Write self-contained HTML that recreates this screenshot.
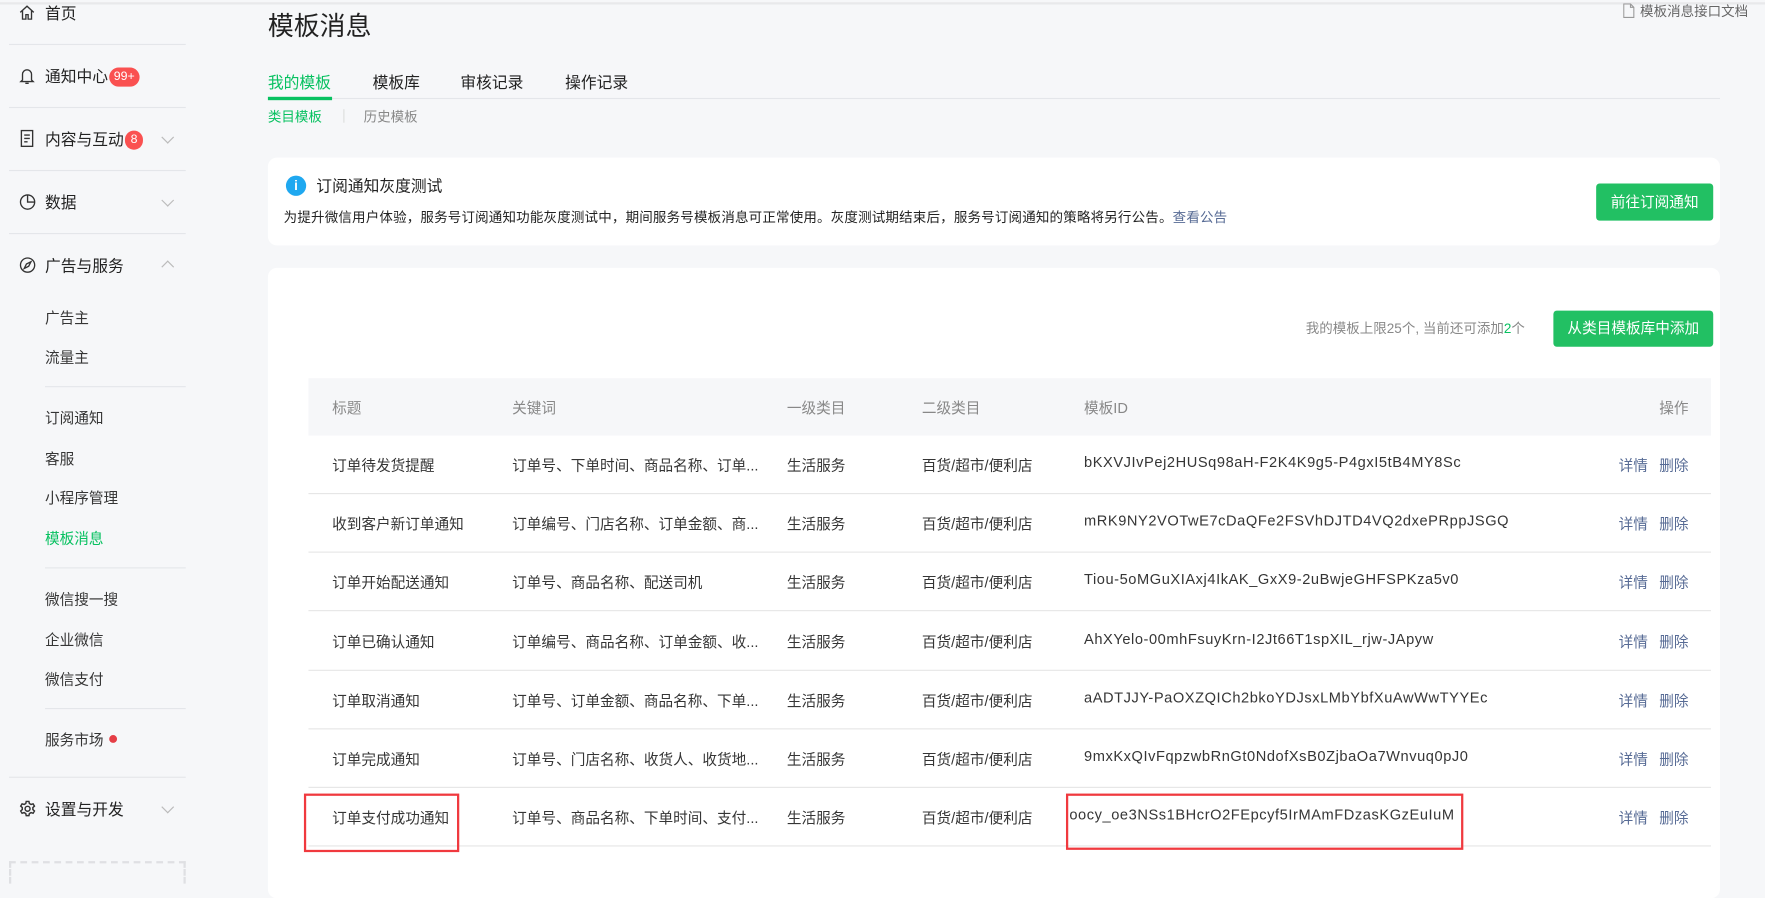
<!DOCTYPE html>
<html><head><meta charset="utf-8"><style>
*{margin:0;padding:0;box-sizing:border-box}
html,body{width:1765px;height:870px;overflow:hidden;background:#f6f7f9}
#w{position:absolute;left:0;top:0;width:1568px;height:773px;transform:scale(1.12564);transform-origin:0 0;font-family:"Liberation Sans","Noto Sans CJK SC",sans-serif;color:#353535;font-size:13px}
.a{position:absolute;white-space:nowrap}
.sep{position:absolute;height:1px;background:#e4e6ea}
.nav{font-size:14px;color:#222}
.sub{font-size:13px;color:#353535}
.badge{display:inline-block;background:#fa5151;color:#fff;border-radius:9px;font-size:11px;height:17px;line-height:17px;padding:0 4px;vertical-align:2px;margin-left:1px}
.chev{position:absolute;width:8px;height:8px;border-right:1px solid #bbb;border-bottom:1px solid #bbb}
.card{position:absolute;background:#fff;border-radius:8px}
.btn{position:absolute;background:#22c063;color:#fff;border-radius:3px;font-size:13px;text-align:center}
.th{color:#888;font-size:13px}
.row{position:absolute;left:274px;width:1246px;height:52px;border-bottom:1px solid #e6e6e6}
.row span{position:absolute;top:16px;white-space:nowrap;font-size:13px;color:#353535}
.row span.id{letter-spacing:0.5px}
.op{color:#576b95!important}
</style></head><body><div id="w">
<div class="sep" style="left:0;top:2px;width:1568px;background:#e8e9eb;height:2px"></div>
<svg class="a" style="left:17px;top:4px" width="14" height="14" viewBox="0 0 14 14" fill="none" stroke="#333" stroke-width="1.2"><path d="M1 7L7 1.5L13 7M3 5.5V13H6V9H8V13H11V5.5"/></svg>
<div class="a nav" style="left:40px;top:2px">首页</div>
<div class="sep" style="left:8px;top:39px;width:157px"></div>
<svg class="a" style="left:17px;top:60px" width="14" height="16" viewBox="0 0 14 16" fill="none" stroke="#333" stroke-width="1.2"><path d="M3 11V6a4 4 0 0 1 8 0v5l1.5 1.5h-11z M5.5 14h3"/></svg>
<div class="a nav" style="left:40px;top:58px">通知中心<span class="badge">99+</span></div>
<div class="sep" style="left:8px;top:95px;width:157px"></div>
<svg class="a" style="left:18px;top:115px" width="12" height="16" viewBox="0 0 12 16" fill="none" stroke="#333" stroke-width="1.2"><rect x="1" y="1" width="10" height="14"/><path d="M3.5 5h5M3.5 8h5M3.5 11h3"/></svg>
<div class="a nav" style="left:40px;top:114px">内容与互动<span class="badge" style="padding:0 5px">8</span></div>
<div class="chev" style="left:145px;top:118px;transform:rotate(45deg)"></div>
<div class="sep" style="left:8px;top:151px;width:157px"></div>
<svg class="a" style="left:17px;top:172px" width="15" height="15" viewBox="0 0 15 15" fill="none" stroke="#333" stroke-width="1.2"><circle cx="7.5" cy="7.5" r="6.3"/><path d="M7.5 1.2V7.5H13.8"/></svg>
<div class="a nav" style="left:40px;top:170px">数据</div>
<div class="chev" style="left:145px;top:174px;transform:rotate(45deg)"></div>
<div class="sep" style="left:8px;top:207px;width:157px"></div>
<svg class="a" style="left:17px;top:228px" width="15" height="15" viewBox="0 0 15 15" fill="none" stroke="#333" stroke-width="1.2"><circle cx="7.5" cy="7.5" r="6.3"/><path d="M10.5 4.5L8.5 8.5L4.5 10.5L6.5 6.5Z"/></svg>
<div class="a nav" style="left:40px;top:226px">广告与服务</div>
<div class="chev" style="left:145px;top:233px;transform:rotate(225deg)"></div>
<div class="a sub" style="left:40px;top:272px">广告主</div>
<div class="a sub" style="left:40px;top:307px">流量主</div>
<div class="sep" style="left:40px;top:343px;width:125px"></div>
<div class="a sub" style="left:40px;top:361px">订阅通知</div>
<div class="a sub" style="left:40px;top:397px">客服</div>
<div class="a sub" style="left:40px;top:432px">小程序管理</div>
<div class="a sub" style="left:40px;top:468px;color:#07c160">模板消息</div>
<div class="sep" style="left:40px;top:504px;width:125px"></div>
<div class="a sub" style="left:40px;top:522px">微信搜一搜</div>
<div class="a sub" style="left:40px;top:558px">企业微信</div>
<div class="a sub" style="left:40px;top:593px">微信支付</div>
<div class="sep" style="left:40px;top:629px;width:125px"></div>
<div class="a sub" style="left:40px;top:647px">服务市场</div>
<div class="a" style="left:97px;top:653px;width:7px;height:7px;border-radius:50%;background:#e53e46"></div>
<div class="sep" style="left:8px;top:690px;width:157px"></div>
<svg class="a" style="left:17px;top:711px" width="15" height="15" viewBox="0 0 15 15" fill="none" stroke="#333" stroke-width="1.3"><circle cx="7.5" cy="7.5" r="2.2"/><path d="M6.3 1h2.4l.4 1.8 1.5.9 1.8-.6 1.2 2-1.4 1.3v1.8l1.4 1.3-1.2 2-1.8-.6-1.5.9-.4 1.8H6.3l-.4-1.8-1.5-.9-1.8.6-1.2-2 1.4-1.3V6.4L1.4 5.1l1.2-2 1.8.6 1.5-.9z"/></svg>
<div class="a nav" style="left:40px;top:709px">设置与开发</div>
<div class="chev" style="left:145px;top:713px;transform:rotate(45deg)"></div>
<div class="a" style="left:8px;top:765px;width:157px;height:20px;border:2px dashed #dfe0e3;border-bottom:none"></div>
<div class="a" style="left:238px;top:4px;font-size:23px;color:#222">模板消息</div>
<svg class="a" style="left:1442px;top:3px" width="10" height="13" viewBox="0 0 10 13" fill="none" stroke="#999" stroke-width="1"><path d="M.5.5h6l3 3v9h-9z M6.5.5v3h3"/></svg>
<div class="a" style="left:1457px;top:1px;font-size:12px;color:#666">模板消息接口文档</div>
<div class="a" style="left:238px;top:63px;font-size:14px;color:#07c160">我的模板</div>
<div class="a" style="left:331px;top:63px;font-size:14px;color:#222">模板库</div>
<div class="a" style="left:409px;top:63px;font-size:14px;color:#222">审核记录</div>
<div class="a" style="left:502px;top:63px;font-size:14px;color:#222">操作记录</div>
<div class="sep" style="left:238px;top:87px;width:1290px"></div>
<div class="a" style="left:238px;top:86px;width:57px;height:3px;background:#07c160"></div>
<div class="a" style="left:238px;top:95px;font-size:12px;color:#07c160">类目模板</div>
<div class="a" style="left:305px;top:97px;width:1px;height:12px;background:#ddd"></div>
<div class="a" style="left:323px;top:95px;font-size:12px;color:#888">历史模板</div>
<div class="card" style="left:238px;top:140px;width:1290px;height:78px"></div>
<div class="a" style="left:254px;top:156px;width:18px;height:18px;border-radius:50%;background:#1fa8f0;color:#fff;font-size:12px;text-align:center;line-height:18px;font-weight:bold">i</div>
<div class="a" style="left:281px;top:155px;font-size:14px;color:#222">订阅通知灰度测试</div>
<div class="a" style="left:252px;top:184px;font-size:12px;color:#222;letter-spacing:0.15px">为提升微信用户体验，服务号订阅通知功能灰度测试中，期间服务号模板消息可正常使用。灰度测试期结束后，服务号订阅通知的策略将另行公告。<span style="color:#576b95">查看公告</span></div>
<div class="btn" style="left:1418px;top:163px;width:104px;height:33px;line-height:33px">前往订阅通知</div>
<div class="card" style="left:238px;top:238px;width:1290px;height:560px"></div>
<div class="a" style="left:1160px;top:283px;font-size:12px;color:#888">我的模板上限25个, 当前还可添加<span style="color:#07c160">2</span>个</div>
<div class="btn" style="left:1380px;top:276px;width:142px;height:32px;line-height:32px">从类目模板库中添加</div>
<div class="a" style="left:274px;top:336px;width:1246px;height:51px;background:#f6f7f9"></div>
<div class="a th" style="left:295px;top:352px">标题</div>
<div class="a th" style="left:455px;top:352px">关键词</div>
<div class="a th" style="left:699px;top:352px">一级类目</div>
<div class="a th" style="left:819px;top:352px">二级类目</div>
<div class="a th" style="left:963px;top:352px">模板ID</div>
<div class="a th" style="left:1474px;top:352px">操作</div>
<div class="row" style="top:387px"><span style="left:21px">订单待发货提醒</span><span style="left:181px">订单号、下单时间、商品名称、订单...</span><span style="left:425px">生活服务</span><span style="left:545px">百货/超市/便利店</span><span class="id" style="left:689px">bKXVJIvPej2HUSq98aH-F2K4K9g5-P4gxI5tB4MY8Sc</span><span class="op" style="left:1164px">详情</span><span class="op" style="left:1200px">删除</span></div>
<div class="row" style="top:439px"><span style="left:21px">收到客户新订单通知</span><span style="left:181px">订单编号、门店名称、订单金额、商...</span><span style="left:425px">生活服务</span><span style="left:545px">百货/超市/便利店</span><span class="id" style="left:689px">mRK9NY2VOTwE7cDaQFe2FSVhDJTD4VQ2dxePRppJSGQ</span><span class="op" style="left:1164px">详情</span><span class="op" style="left:1200px">删除</span></div>
<div class="row" style="top:491px"><span style="left:21px">订单开始配送通知</span><span style="left:181px">订单号、商品名称、配送司机</span><span style="left:425px">生活服务</span><span style="left:545px">百货/超市/便利店</span><span class="id" style="left:689px">Tiou-5oMGuXIAxj4IkAK_GxX9-2uBwjeGHFSPKza5v0</span><span class="op" style="left:1164px">详情</span><span class="op" style="left:1200px">删除</span></div>
<div class="row" style="top:544px"><span style="left:21px">订单已确认通知</span><span style="left:181px">订单编号、商品名称、订单金额、收...</span><span style="left:425px">生活服务</span><span style="left:545px">百货/超市/便利店</span><span class="id" style="left:689px">AhXYelo-00mhFsuyKrn-I2Jt66T1spXIL_rjw-JApyw</span><span class="op" style="left:1164px">详情</span><span class="op" style="left:1200px">删除</span></div>
<div class="row" style="top:596px"><span style="left:21px">订单取消通知</span><span style="left:181px">订单号、订单金额、商品名称、下单...</span><span style="left:425px">生活服务</span><span style="left:545px">百货/超市/便利店</span><span class="id" style="left:689px">aADTJJY-PaOXZQICh2bkoYDJsxLMbYbfXuAwWwTYYEc</span><span class="op" style="left:1164px">详情</span><span class="op" style="left:1200px">删除</span></div>
<div class="row" style="top:648px"><span style="left:21px">订单完成通知</span><span style="left:181px">订单号、门店名称、收货人、收货地...</span><span style="left:425px">生活服务</span><span style="left:545px">百货/超市/便利店</span><span class="id" style="left:689px">9mxKxQIvFqpzwbRnGt0NdofXsB0ZjbaOa7Wnvuq0pJ0</span><span class="op" style="left:1164px">详情</span><span class="op" style="left:1200px">删除</span></div>
<div class="row" style="top:700px"><span style="left:21px">订单支付成功通知</span><span style="left:181px">订单号、商品名称、下单时间、支付...</span><span style="left:425px">生活服务</span><span style="left:545px">百货/超市/便利店</span><span class="id" style="left:676px">oocy_oe3NSs1BHcrO2FEpcyf5IrMAmFDzasKGzEuIuM</span><span class="op" style="left:1164px">详情</span><span class="op" style="left:1200px">删除</span></div>
<div class="a" style="left:270px;top:705px;width:138px;height:52px;border:2px solid #f0393e"></div>
<div class="a" style="left:947px;top:705px;width:353px;height:50px;border:2px solid #f0393e"></div>
</div></body></html>
